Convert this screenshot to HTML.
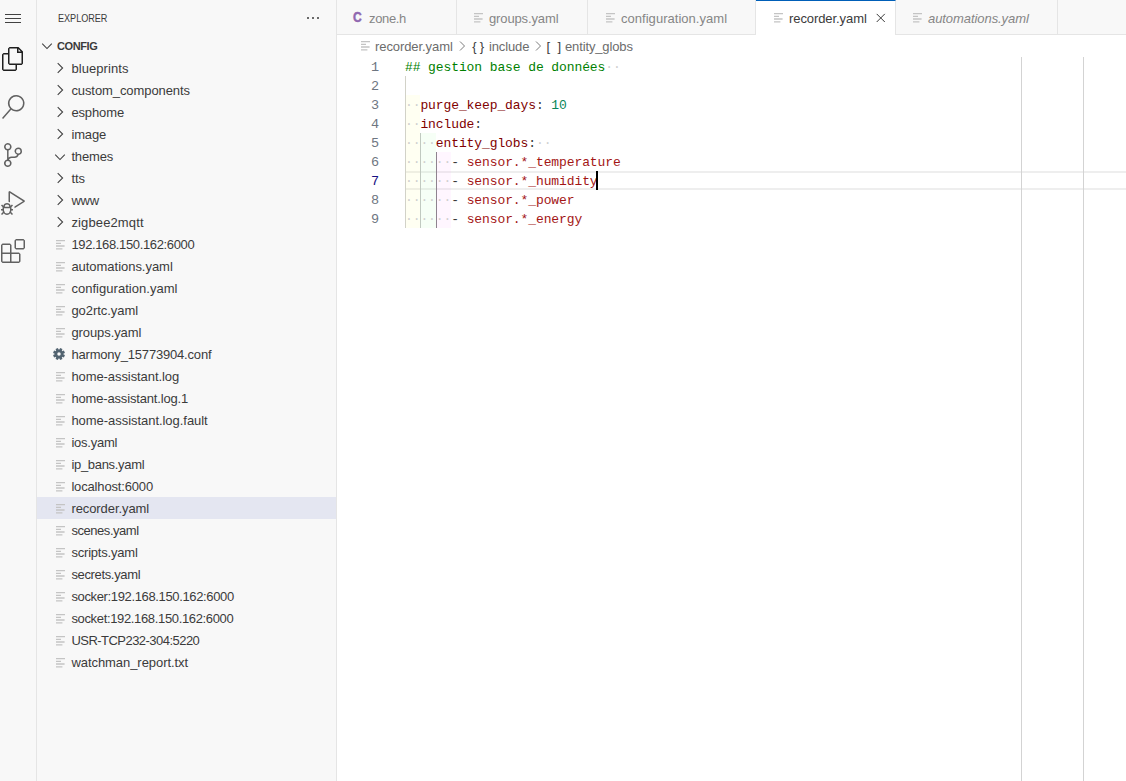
<!DOCTYPE html>
<html lang="fr"><head><meta charset="utf-8"><title>recorder.yaml</title>
<style>
*{box-sizing:border-box;margin:0;padding:0}
html,body{width:1126px;height:781px;overflow:hidden;background:#fff}
body{position:relative;font-family:"Liberation Sans",sans-serif;font-size:13px;color:#3b3b3b}
.abs{position:absolute}
#act{position:absolute;left:0;top:0;width:37px;height:781px;background:#f8f8f8;border-right:1px solid #e5e5e5;overflow:hidden}
#side{position:absolute;left:37px;top:0;width:300px;height:781px;background:#f8f8f8;border-right:1px solid #e5e5e5;overflow:hidden}
#side .title{position:absolute;left:20.6px;top:11px;font-size:11px;line-height:14px;color:#3b3b3b}
#side .dots{position:absolute;left:268px;top:10px}
#side .hdr{position:absolute;left:0;top:35px;width:299px;height:22px}
#side .hdr span{position:absolute;left:20px;top:4px;font-size:11px;line-height:14px;font-weight:bold;color:#3b3b3b}
#side .hdr svg{position:absolute;left:2px;top:3px}
.row{position:absolute;left:-37px;padding-left:37px;width:336px;height:22px;line-height:22px;white-space:nowrap}
.row.sel{background:#e4e6f1}
.row .lbl{position:absolute;left:71.4px;top:1px;font-size:13px}
.row .chev{position:absolute;left:52px;top:3.5px}
.row .fi{position:absolute;left:55.9px;top:5.5px}
.row .gear{position:absolute;left:53px;top:5px}
#tabs{position:absolute;left:337px;top:0;width:789px;height:35px;background:#f8f8f8;border-bottom:1px solid #e5e5e5}
.tab{position:absolute;top:0;height:35px;border-right:1px solid #e5e5e5;color:#868686;font-size:13px;line-height:35px;white-space:nowrap}
.tab.act{background:#fff;color:#3b3b3b;border-top:1px solid #005fb8;height:35px;line-height:33px}
.tab .t{position:absolute;top:1px}
.tab .fi{position:absolute;top:11.5px}
#bc{position:absolute;left:337px;top:35px;width:789px;height:22px;line-height:22px;font-size:13px;color:#6c6c6c;white-space:nowrap}
#bc span, #bc svg{position:absolute}
#bc span{top:1px}
#ed{position:absolute;left:337px;top:57px;width:789px;height:724px;font-family:"Liberation Mono",monospace;font-size:13px;line-height:19px}
.ln{position:absolute;left:0;width:42px;text-align:right;color:#6e7681;height:19px;font-size:13.5px}
.cl{position:absolute;left:68px;height:19px;white-space:pre;letter-spacing:-0.1px}
.k{color:#800000}.c{color:#008000}.n{color:#098658}.s{color:#a31515}.p{color:#3b3b3b}.w{color:#cfcfcf}
.cicon{position:absolute;top:-0.5px;font-weight:bold;font-size:14px;color:#9068b0;-webkit-text-stroke:0.45px #9068b0;transform:scaleX(0.86);transform-origin:0 0}
.ln.cur{color:#171184}
#bc .sym{color:#3b3b3b}

</style></head>
<body>
<div id="act">
<svg class="abs" style="left:5px;top:10px" width="16" height="16" viewBox="0 0 16 16"><path fill="#424242" d="M16 5H0V4h16v1zm0 8H0v-1h16v1zm0-4.008H0V8h16v.992z"/></svg>
<svg class="abs" style="left:1px;top:47px" width="24" height="24" viewBox="0 0 24 24"><path fill="#1f1f1f" d="M17.5 0h-9L7 1.5V6H2.5L1 7.5v15.07L2.5 24h12.07L16 22.57V18h4.7l1.3-1.43V4.5L17.5 0zm0 2.12l2.38 2.38H17.5V2.12zm-3 20.38h-12v-15H7v9.07L8.5 18h6v4.5zm6-6h-12v-15H16V6h4.5v10.5z"/></svg>
<svg class="abs" style="left:1px;top:95px" width="24" height="24" viewBox="0 0 24 24"><path fill="#616161" d="M15.25 0a8.25 8.25 0 0 0-6.18 13.72L1 22.88l1.12 1 8.05-9.12A8.251 8.251 0 1 0 15.25.01V0zm0 15a6.75 6.75 0 1 1 0-13.5 6.75 6.75 0 0 1 0 13.5z"/></svg>
<svg class="abs" style="left:1px;top:143px" width="24" height="24" viewBox="0 0 24 24"><path fill="#616161" d="M21.007 8.222A3.738 3.738 0 0 0 15.045 5.2a3.737 3.737 0 0 0 1.156 6.583 2.988 2.988 0 0 1-2.668 1.67h-2.99a4.456 4.456 0 0 0-2.989 1.165V7.4a3.737 3.737 0 1 0-1.494 0v9.117a3.776 3.776 0 1 0 1.816.099 2.99 2.99 0 0 1 2.668-1.667h2.99a4.484 4.484 0 0 0 4.223-3.039 3.736 3.736 0 0 0 3.25-3.687zM4.565 3.738a2.242 2.242 0 1 1 4.484 0 2.242 2.242 0 0 1-4.484 0zm4.484 16.441a2.242 2.242 0 1 1-4.484 0 2.242 2.242 0 0 1 4.484 0zm8.221-9.715a2.242 2.242 0 1 1 0-4.485 2.242 2.242 0 0 1 0 4.485z"/></svg>
<svg class="abs" style="left:1px;top:191px" width="24" height="24" viewBox="0 0 24 24"><path fill="#616161" d="M10.94 13.5l-1.32 1.32a3.73 3.73 0 0 0-7.24 0L1.06 13.5 0 14.56l1.72 1.72-.22.22V18H0v1.5h1.5v.08c.077.489.214.966.41 1.42L0 22.94 1.06 24l1.65-1.65A4.308 4.308 0 0 0 6 24a4.31 4.31 0 0 0 3.29-1.65L10.94 24 12 22.94 10.09 21c.198-.464.336-.951.41-1.45v-.1H12V18h-1.5v-1.5l-.22-.22L12 14.56l-1.06-1.06zM6 13.5a2.25 2.25 0 0 1 2.25 2.25h-4.5A2.25 2.25 0 0 1 6 13.5zm3 6a3.33 3.33 0 0 1-3 3 3.33 3.33 0 0 1-3-3v-2.25h6v2.25zm14.76-9.9v1.26L13.5 17.37V15.6l8.5-5.37L9 2v9.46a5.07 5.07 0 0 0-1.5-.72V.63L8.64 0l15.12 9.6z"/></svg>
<svg class="abs" style="left:1px;top:239px" width="24" height="24" viewBox="0 0 24 24"><path fill="#616161" d="M13.5 1.5L15 0h7.5L24 1.5V9l-1.5 1.5H15L13.5 9V1.5zm1.5 0V9h7.5V1.5H15zM0 15V6l1.5-1.5H9L10.5 6v7.5H18l1.5 1.5v7.5L18 24H1.5L0 22.5V15zm9-1.5V6H1.5v7.5H9zM9 15H1.5v7.5H9V15zm1.5 7.5H18V15h-7.5v7.5z"/></svg>
</div>
<div id="side">
<div class="title" style="transform:scaleX(0.83);transform-origin:0 0;letter-spacing:-0.05px">EXPLORER</div>
<svg class="dots" width="16" height="16" viewBox="0 0 16 16"><circle cx="3" cy="8" r="1" fill="#3b3b3b"/><circle cx="8" cy="8" r="1" fill="#3b3b3b"/><circle cx="13" cy="8" r="1" fill="#3b3b3b"/></svg>
<div class="hdr"><svg width="16" height="16" viewBox="0 0 16 16"><path d="M3.2 5.7 L8 10.6 L12.8 5.7" fill="none" stroke="#404040" stroke-width="1.05"/></svg><span style="letter-spacing:-0.4px">CONFIG</span></div>
<div class="row" style="top:57px"><svg class="chev" style="top:3px" width="16" height="16" viewBox="0 0 16 16"><path d="M5.7 3.2 L10.6 8 L5.7 12.8" fill="none" stroke="#404040" stroke-width="1.05"/></svg><span class="lbl" style="letter-spacing:0.073px">blueprints</span></div>
<div class="row" style="top:79px"><svg class="chev" style="top:3px" width="16" height="16" viewBox="0 0 16 16"><path d="M5.7 3.2 L10.6 8 L5.7 12.8" fill="none" stroke="#404040" stroke-width="1.05"/></svg><span class="lbl" style="letter-spacing:-0.085px">custom_components</span></div>
<div class="row" style="top:101px"><svg class="chev" style="top:3px" width="16" height="16" viewBox="0 0 16 16"><path d="M5.7 3.2 L10.6 8 L5.7 12.8" fill="none" stroke="#404040" stroke-width="1.05"/></svg><span class="lbl" style="letter-spacing:-0.126px">esphome</span></div>
<div class="row" style="top:123px"><svg class="chev" style="top:3px" width="16" height="16" viewBox="0 0 16 16"><path d="M5.7 3.2 L10.6 8 L5.7 12.8" fill="none" stroke="#404040" stroke-width="1.05"/></svg><span class="lbl" style="letter-spacing:-0.144px">image</span></div>
<div class="row" style="top:145px"><svg class="chev" width="16" height="16" viewBox="0 0 16 16"><path d="M3.2 5.7 L8 10.6 L12.8 5.7" fill="none" stroke="#404040" stroke-width="1.05"/></svg><span class="lbl" style="letter-spacing:-0.157px">themes</span></div>
<div class="row" style="top:167px"><svg class="chev" style="top:3px" width="16" height="16" viewBox="0 0 16 16"><path d="M5.7 3.2 L10.6 8 L5.7 12.8" fill="none" stroke="#404040" stroke-width="1.05"/></svg><span class="lbl" style="letter-spacing:-0.011px">tts</span></div>
<div class="row" style="top:189px"><svg class="chev" style="top:3px" width="16" height="16" viewBox="0 0 16 16"><path d="M5.7 3.2 L10.6 8 L5.7 12.8" fill="none" stroke="#404040" stroke-width="1.05"/></svg><span class="lbl" style="letter-spacing:-0.157px">www</span></div>
<div class="row" style="top:211px"><svg class="chev" style="top:3px" width="16" height="16" viewBox="0 0 16 16"><path d="M5.7 3.2 L10.6 8 L5.7 12.8" fill="none" stroke="#404040" stroke-width="1.05"/></svg><span class="lbl" style="letter-spacing:0.134px">zigbee2mqtt</span></div>
<div class="row" style="top:233px"><svg class="fi" style="" width="12" height="12" viewBox="0 0 12 12"><path d="M0 1.6h9M0 4.3h5M0 7h8.6M0 9.8h6.4" stroke="#c4c4c4" stroke-width="1.3" fill="none"/></svg><span class="lbl" style="letter-spacing:-0.362px">192.168.150.162:6000</span></div>
<div class="row" style="top:255px"><svg class="fi" style="" width="12" height="12" viewBox="0 0 12 12"><path d="M0 1.6h9M0 4.3h5M0 7h8.6M0 9.8h6.4" stroke="#c4c4c4" stroke-width="1.3" fill="none"/></svg><span class="lbl" style="letter-spacing:-0.031px">automations.yaml</span></div>
<div class="row" style="top:277px"><svg class="fi" style="" width="12" height="12" viewBox="0 0 12 12"><path d="M0 1.6h9M0 4.3h5M0 7h8.6M0 9.8h6.4" stroke="#c4c4c4" stroke-width="1.3" fill="none"/></svg><span class="lbl" style="letter-spacing:0.033px">configuration.yaml</span></div>
<div class="row" style="top:299px"><svg class="fi" style="" width="12" height="12" viewBox="0 0 12 12"><path d="M0 1.6h9M0 4.3h5M0 7h8.6M0 9.8h6.4" stroke="#c4c4c4" stroke-width="1.3" fill="none"/></svg><span class="lbl" style="letter-spacing:-0.046px">go2rtc.yaml</span></div>
<div class="row" style="top:321px"><svg class="fi" style="" width="12" height="12" viewBox="0 0 12 12"><path d="M0 1.6h9M0 4.3h5M0 7h8.6M0 9.8h6.4" stroke="#c4c4c4" stroke-width="1.3" fill="none"/></svg><span class="lbl" style="letter-spacing:-0.083px">groups.yaml</span></div>
<div class="row" style="top:343px"><svg class="gear" width="12" height="12" viewBox="0 0 12 12"><circle cx="6" cy="6" r="3.1" fill="none" stroke="#526370" stroke-width="2.7"/><path d="M9.51 7.45L11.45 8.26M7.45 9.51L8.26 11.45M4.55 9.51L3.74 11.45M2.49 7.45L0.55 8.26M2.49 4.55L0.55 3.74M4.55 2.49L3.74 0.55M7.45 2.49L8.26 0.55M9.51 4.55L11.45 3.74" stroke="#526370" stroke-width="2.6" fill="none"/></svg><span class="lbl" style="letter-spacing:-0.183px">harmony_15773904.conf</span></div>
<div class="row" style="top:365px"><svg class="fi" style="" width="12" height="12" viewBox="0 0 12 12"><path d="M0 1.6h9M0 4.3h5M0 7h8.6M0 9.8h6.4" stroke="#c4c4c4" stroke-width="1.3" fill="none"/></svg><span class="lbl" style="letter-spacing:-0.079px">home-assistant.log</span></div>
<div class="row" style="top:387px"><svg class="fi" style="" width="12" height="12" viewBox="0 0 12 12"><path d="M0 1.6h9M0 4.3h5M0 7h8.6M0 9.8h6.4" stroke="#c4c4c4" stroke-width="1.3" fill="none"/></svg><span class="lbl" style="letter-spacing:-0.163px">home-assistant.log.1</span></div>
<div class="row" style="top:409px"><svg class="fi" style="" width="12" height="12" viewBox="0 0 12 12"><path d="M0 1.6h9M0 4.3h5M0 7h8.6M0 9.8h6.4" stroke="#c4c4c4" stroke-width="1.3" fill="none"/></svg><span class="lbl" style="letter-spacing:-0.042px">home-assistant.log.fault</span></div>
<div class="row" style="top:431px"><svg class="fi" style="" width="12" height="12" viewBox="0 0 12 12"><path d="M0 1.6h9M0 4.3h5M0 7h8.6M0 9.8h6.4" stroke="#c4c4c4" stroke-width="1.3" fill="none"/></svg><span class="lbl" style="letter-spacing:-0.236px">ios.yaml</span></div>
<div class="row" style="top:453px"><svg class="fi" style="" width="12" height="12" viewBox="0 0 12 12"><path d="M0 1.6h9M0 4.3h5M0 7h8.6M0 9.8h6.4" stroke="#c4c4c4" stroke-width="1.3" fill="none"/></svg><span class="lbl" style="letter-spacing:-0.309px">ip_bans.yaml</span></div>
<div class="row" style="top:475px"><svg class="fi" style="" width="12" height="12" viewBox="0 0 12 12"><path d="M0 1.6h9M0 4.3h5M0 7h8.6M0 9.8h6.4" stroke="#c4c4c4" stroke-width="1.3" fill="none"/></svg><span class="lbl" style="letter-spacing:-0.16px">localhost:6000</span></div>
<div class="row sel" style="top:497px"><svg class="fi" style="" width="12" height="12" viewBox="0 0 12 12"><path d="M0 1.6h9M0 4.3h5M0 7h8.6M0 9.8h6.4" stroke="#c4c4c4" stroke-width="1.3" fill="none"/></svg><span class="lbl" style="letter-spacing:-0.081px">recorder.yaml</span></div>
<div class="row" style="top:519px"><svg class="fi" style="" width="12" height="12" viewBox="0 0 12 12"><path d="M0 1.6h9M0 4.3h5M0 7h8.6M0 9.8h6.4" stroke="#c4c4c4" stroke-width="1.3" fill="none"/></svg><span class="lbl" style="letter-spacing:-0.45px">scenes.yaml</span></div>
<div class="row" style="top:541px"><svg class="fi" style="" width="12" height="12" viewBox="0 0 12 12"><path d="M0 1.6h9M0 4.3h5M0 7h8.6M0 9.8h6.4" stroke="#c4c4c4" stroke-width="1.3" fill="none"/></svg><span class="lbl" style="letter-spacing:-0.194px">scripts.yaml</span></div>
<div class="row" style="top:563px"><svg class="fi" style="" width="12" height="12" viewBox="0 0 12 12"><path d="M0 1.6h9M0 4.3h5M0 7h8.6M0 9.8h6.4" stroke="#c4c4c4" stroke-width="1.3" fill="none"/></svg><span class="lbl" style="letter-spacing:-0.347px">secrets.yaml</span></div>
<div class="row" style="top:585px"><svg class="fi" style="" width="12" height="12" viewBox="0 0 12 12"><path d="M0 1.6h9M0 4.3h5M0 7h8.6M0 9.8h6.4" stroke="#c4c4c4" stroke-width="1.3" fill="none"/></svg><span class="lbl" style="letter-spacing:-0.357px">socker:192.168.150.162:6000</span></div>
<div class="row" style="top:607px"><svg class="fi" style="" width="12" height="12" viewBox="0 0 12 12"><path d="M0 1.6h9M0 4.3h5M0 7h8.6M0 9.8h6.4" stroke="#c4c4c4" stroke-width="1.3" fill="none"/></svg><span class="lbl" style="letter-spacing:-0.345px">socket:192.168.150.162:6000</span></div>
<div class="row" style="top:629px"><svg class="fi" style="" width="12" height="12" viewBox="0 0 12 12"><path d="M0 1.6h9M0 4.3h5M0 7h8.6M0 9.8h6.4" stroke="#c4c4c4" stroke-width="1.3" fill="none"/></svg><span class="lbl" style="letter-spacing:-0.533px">USR-TCP232-304:5220</span></div>
<div class="row" style="top:651px"><svg class="fi" style="" width="12" height="12" viewBox="0 0 12 12"><path d="M0 1.6h9M0 4.3h5M0 7h8.6M0 9.8h6.4" stroke="#c4c4c4" stroke-width="1.3" fill="none"/></svg><span class="lbl" style="letter-spacing:-0.057px">watchman_report.txt</span></div>
</div>
<div id="tabs">
<div class="tab" style="left:0;width:120px"><span class="cicon" style="left:16px">C</span><span class="t" style="left:32px;letter-spacing:-0.341px">zone.h</span></div>
<div class="tab" style="left:120px;width:131px"><svg class="fi" style="left:17px" width="12" height="12" viewBox="0 0 12 12"><path d="M0 1.6h9M0 4.3h5M0 7h8.6M0 9.8h6.4" stroke="#c4c4c4" stroke-width="1.3" fill="none"/></svg><span class="t" style="left:32px;letter-spacing:-0.128px">groups.yaml</span></div>
<div class="tab" style="left:251px;width:168px"><svg class="fi" style="left:18px" width="12" height="12" viewBox="0 0 12 12"><path d="M0 1.6h9M0 4.3h5M0 7h8.6M0 9.8h6.4" stroke="#c4c4c4" stroke-width="1.3" fill="none"/></svg><span class="t" style="left:33px;letter-spacing:0.033px">configuration.yaml</span></div>
<div class="tab act" style="left:419px;width:140px"><svg class="fi" style="left:17.7px;top:10.6px" width="12" height="12" viewBox="0 0 12 12"><path d="M0 1.6h9M0 4.3h5M0 7h8.6M0 9.8h6.4" stroke="#c4c4c4" stroke-width="1.3" fill="none"/></svg><span class="t" style="left:33px;letter-spacing:-0.081px">recorder.yaml</span><svg class="abs" style="left:118px;top:11px" width="14" height="14" viewBox="0 0 14 14"><path d="M2.7 1.9l8.1 8.1M10.8 1.9l-8.1 8.1" stroke="#3b3b3b" stroke-width="1" fill="none"/></svg></div>
<div class="tab" style="left:559px;width:162px"><svg class="fi" style="left:17px" width="12" height="12" viewBox="0 0 12 12"><path d="M0 1.6h9M0 4.3h5M0 7h8.6M0 9.8h6.4" stroke="#c4c4c4" stroke-width="1.3" fill="none"/></svg><span class="t" style="left:32px;font-style:italic;letter-spacing:-0.068px">automations.yaml</span></div>
</div>
<div id="bc">
<svg class="fi" style="left:24px;top:5px" width="12" height="12" viewBox="0 0 12 12"><path d="M0 1.6h9M0 4.3h5M0 7h8.6M0 9.8h6.4" stroke="#c4c4c4" stroke-width="1.3" fill="none"/></svg>
<span style="left:38px;letter-spacing:-0.081px">recorder.yaml</span>
<svg style="left:117px;top:3px" width="16" height="16" viewBox="0 0 16 16"><path d="M6 3.5 L10.5 8 L6 12.5" fill="none" stroke="#7c7c7c" stroke-width="1"/></svg>
<span class="sym" style="left:135.2px;letter-spacing:0.3px">{&thinsp;}</span>
<span style="left:152px;letter-spacing:-0.129px">include</span>
<svg style="left:192.7px;top:3px" width="16" height="16" viewBox="0 0 16 16"><path d="M6 3.5 L10.5 8 L6 12.5" fill="none" stroke="#7c7c7c" stroke-width="1"/></svg>
<span class="sym" style="left:209.6px">[</span><span class="sym" style="left:220.6px">]</span>
<span style="left:228px;letter-spacing:-0.133px">entity_globs</span>
</div>
<div id="ed">
<div class="abs" style="left:68px;top:114px;width:721px;height:19px;border-top:2px solid #eee;border-bottom:2px solid #eee"></div>
<div class="abs" style="left:684px;top:0;width:1px;height:724px;background:#d3d3d3"></div>
<div class="abs" style="left:746px;top:0;width:1px;height:724px;background:#d3d3d3"></div>
<div class="abs" style="left:68px;top:38px;width:15.4px;height:133px;background:rgba(255,255,64,0.07)"></div>
<div class="abs" style="left:83.4px;top:76px;width:15.4px;height:95px;background:rgba(127,255,127,0.07)"></div>
<div class="abs" style="left:98.8px;top:95px;width:15.4px;height:76px;background:rgba(255,127,255,0.07)"></div>
<div class="abs" style="left:68px;top:19px;width:1px;height:152px;background:#d2d2c8"></div>
<div class="abs" style="left:83px;top:76px;width:1px;height:95px;background:#c0c9c0"></div>
<div class="abs" style="left:99px;top:95px;width:1px;height:76px;background:#8f838f"></div>
<div class="ln" style="top:1px">1</div><div class="cl" style="top:1px"><span class="c">## gestion base de données</span><span class="w">··</span></div>
<div class="ln" style="top:20px">2</div><div class="cl" style="top:20px"></div>
<div class="ln" style="top:39px">3</div><div class="cl" style="top:39px"><span class="w">··</span><span class="k">purge_keep_days</span><span class="p">: </span><span class="n">10</span></div>
<div class="ln" style="top:58px">4</div><div class="cl" style="top:58px"><span class="w">··</span><span class="k">include</span><span class="p">:</span></div>
<div class="ln" style="top:77px">5</div><div class="cl" style="top:77px"><span class="w">····</span><span class="k">entity_globs</span><span class="p">:</span><span class="w">··</span></div>
<div class="ln" style="top:96px">6</div><div class="cl" style="top:96px"><span class="w">······</span><span class="p">- </span><span class="s">sensor.*_temperature</span></div>
<div class="ln cur" style="top:115px">7</div><div class="cl" style="top:115px"><span class="w">······</span><span class="p">- </span><span class="s">sensor.*_humidity</span></div>
<div class="ln" style="top:134px">8</div><div class="cl" style="top:134px"><span class="w">······</span><span class="p">- </span><span class="s">sensor.*_power</span></div>
<div class="ln" style="top:153px">9</div><div class="cl" style="top:153px"><span class="w">······</span><span class="p">- </span><span class="s">sensor.*_energy</span></div>
<div class="abs" style="left:259px;top:114px;width:2px;height:19px;background:#000"></div>
</div>

</body></html>
